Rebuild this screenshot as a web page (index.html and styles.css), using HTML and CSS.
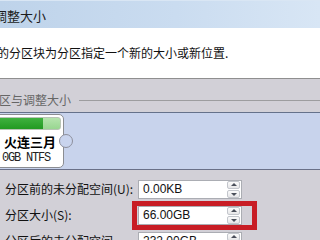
FILE: index.html
```html
<!DOCTYPE html>
<html lang="zh-CN">
<head>
    <meta charset="UTF-8">
    <meta name="viewport" content="width=device-width, initial-scale=1.0">
    <title>调整大小</title>
    <link rel="stylesheet" href="styles.css">
</head>
<body>
    <div class="window">
        <div class="titlebar"><span class="title">调整大小</span></div>

        <div class="intro">
            <p class="intro-text">的分区块为分区指定一个新的大小或新位置.</p>
        </div>

        <div class="panel">
            <div class="group-head">
                <span class="group-label">区与调整大小</span>
                <span class="group-line"></span>
            </div>

            <div class="map">
                <div class="part">
                    <div class="part-bar"><div class="part-used"></div></div>
                    <div class="part-name">火连三月</div>
                    <div class="part-info">0GB NTFS</div>
                    <span class="handle"></span>
                </div>
            </div>

            <div class="fields">
                <div class="row">
                    <label class="row-label">分区前的未分配空间(U):</label>
                    <div class="spin">
                        <span class="spin-value">0.00KB</span>
                        <span class="arrows"><i class="arrow up"></i><i class="arrow down"></i></span>
                    </div>
                </div>
                <div class="row">
                    <label class="row-label">分区大小(S):</label>
                    <div class="spin">
                        <span class="spin-value">66.00GB</span>
                        <span class="arrows"><i class="arrow up"></i><i class="arrow down"></i></span>
                    </div>
                    <span class="mark"></span>
                </div>
                <div class="row">
                    <label class="row-label">分区后的未分配空间</label>
                    <div class="spin">
                        <span class="spin-value">232.00GB</span>
                        <span class="arrows"><i class="arrow up"></i><i class="arrow down"></i></span>
                    </div>
                </div>
            </div>
        </div>
    </div>
</body>
</html>
```

FILE: styles.css
```css
body {
    margin: 0;
    width: 320px;
    height: 240px;
    overflow: hidden;
    font-family: "Noto Sans CJK SC", "Liberation Sans", sans-serif;
    background-color: #fff;
}
.window {
    width: 320px;
}
.titlebar {
    height: 23px;
    padding-top: 4px;
    background: linear-gradient(to right, #bed3ea, #cadcf0 55%, #d8e6f5);
    border-top: 1px solid #d9e6f4;
    box-sizing: content-box;
}
.title {
    display: block;
    margin-left: -6px;
    font-size: 13px;
    line-height: 22px;
    color: #1c1c1c;
}
.intro {
    height: 50px;
    background-color: #fff;
    border-bottom: 1px solid #8f8f8f;
}
.intro-text {
    margin: 0 0 0 -3px;
    padding-top: 18px;
    font-size: 12px;
    line-height: 14px;
    color: #111;
    white-space: nowrap;
}
.panel {
    background-color: #d2d0d7;
    height: 161px;
}
.group-head {
    display: flex;
    align-items: center;
    height: 24px;
    padding-top: 9px;
}
.group-label {
    margin-left: -1px;
    font-size: 12px;
    line-height: 14px;
    color: #666;
    white-space: nowrap;
}
.group-line {
    flex: 1;
    height: 1px;
    margin-left: 8px;
    background-color: #9d9d9f;
}
.map {
    height: 56px;
    background-color: #c8d3ec;
    border-top: 1px solid #65718a;
    border-bottom: 1px solid #6a7088;
}
.part {
    position: relative;
    width: 80px;
    height: 52px;
    margin: 1px 0 0 -20px;
    padding-left: 2px;
    background-color: #fff;
    border: 1px solid #8b8d92;
    border-radius: 5px;
}
.part-bar {
    height: 11px;
    margin: 2px 2px 0 0;
    border: 1px solid #b9c4b6;
    border-radius: 3px;
    background: linear-gradient(#b6e4ae, #98d690);
    overflow: hidden;
}
.part-used {
    width: 59px;
    height: 100%;
    background: linear-gradient(#3fb13f, #229a22);
}
.part-name {
    margin: 4px 0 0 21px;
    font-size: 13px;
    font-weight: bold;
    line-height: 15px;
    color: #000;
    white-space: nowrap;
}
.part-info {
    margin: 3px 0 0 19px;
    font-family: "Liberation Mono", "DejaVu Sans Mono", monospace;
    font-size: 12px;
    letter-spacing: -1.2px;
    line-height: 12px;
    color: #222;
    white-space: nowrap;
}
.handle {
    position: absolute;
    left: 78px;
    top: 19px;
    width: 12px;
    height: 12px;
    border: 1px solid #8d8f9c;
    border-radius: 50%;
    background-color: #c9d4ee;
}
.fields {
    padding-top: 6px;
}
.row {
    position: relative;
    display: grid;
    grid-template-columns: 138px 104px;
    align-items: center;
    height: 26px;
}
.row-label {
    padding-left: 5px;
    font-size: 12px;
    line-height: 14px;
    color: #111;
    white-space: nowrap;
}
.spin {
    display: flex;
    align-items: center;
    justify-content: space-between;
    height: 19px;
    padding: 0 1px 0 4px;
    background-color: #fff;
    border: 1px solid #abadb3;
    box-sizing: border-box;
}
.spin-value {
    font-family: "Liberation Sans", sans-serif;
    font-size: 12px;
    color: #111;
}
.arrows {
    display: flex;
    flex-direction: column;
    gap: 1px;
}
.arrow {
    position: relative;
    display: block;
    width: 11px;
    height: 6px;
    border: 1px solid #c3c6cc;
    border-radius: 2px;
    background: linear-gradient(#fbfbfb, #e6e6e8);
}
.arrow::before {
    content: "";
    position: absolute;
    left: 3px;
    border-left: 3px solid transparent;
    border-right: 3px solid transparent;
}
.arrow.up::before {
    top: 1px;
    border-bottom: 3px solid #4a4f5a;
}
.arrow.down::before {
    top: 2px;
    border-top: 3px solid #4a4f5a;
}
.mark {
    position: absolute;
    left: 132px;
    top: -1px;
    width: 125px;
    height: 29px;
    border: 5px solid #c81d25;
    box-sizing: border-box;
}
```
